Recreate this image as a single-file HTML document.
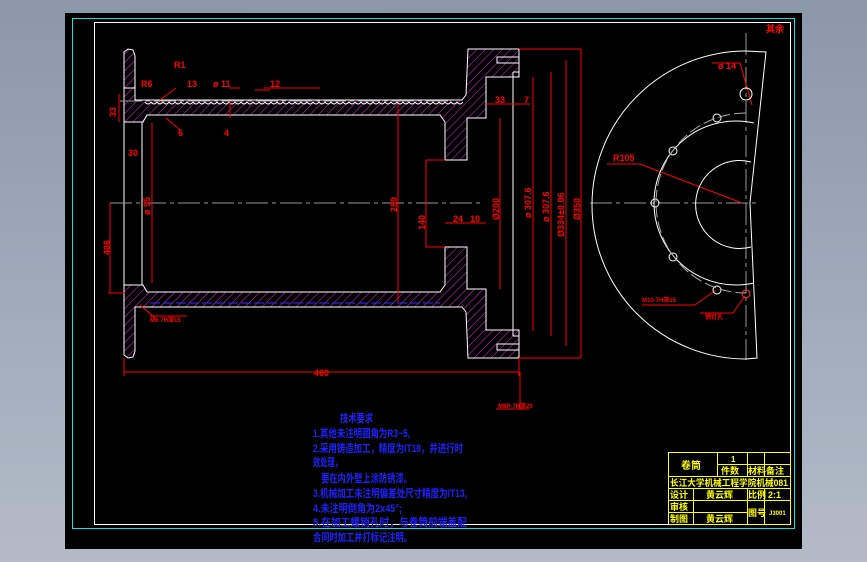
<!DOCTYPE html>
<html><head><meta charset="utf-8"><style>
html,body{margin:0;padding:0;}
body{width:867px;height:562px;overflow:hidden;background:linear-gradient(#8a98aa,#b3bbc7);position:relative;font-family:"Liberation Sans","Noto Sans CJK SC",sans-serif;}
svg{position:absolute;left:0;top:0;}
</style></head><body>
<svg width="867" height="562" viewBox="0 0 867 562" xmlns="http://www.w3.org/2000/svg">
<defs>
<pattern id="h" width="6" height="6" patternUnits="userSpaceOnUse" patternTransform="rotate(45)">
<line x1="0" y1="0" x2="0" y2="6" stroke="#e020e0" stroke-width="1"/>
</pattern>
</defs>
<rect x="65" y="13" width="737" height="536" fill="#000"/>
<rect x="72.5" y="18.5" width="722" height="510" fill="none" stroke="#00e5e5" stroke-width="1"/>
<rect x="94.5" y="22.5" width="696" height="502" fill="none" stroke="#fff" stroke-width="1"/>

<g stroke="#fff" stroke-width="1" fill="url(#h)">
<path d="M124,52 L128,49 L133,50 L135,56 L135,100 L462,100 L466,95 L468,49 L519,49 L519,77 L486,77 L486,118 L467,118 L467,160 L445,160 L445,122 L440,115 L147,115 L143,122 L124,122 Z"/>
<path d="M124,355 L128,358 L133,357 L135,351 L135,307 L462,307 L466,312 L468,358 L519,358 L519,330 L486,330 L486,289 L467,289 L467,247 L445,247 L445,285 L440,292 L147,292 L143,285 L124,285 Z"/>
</g>
<g stroke="#fff" stroke-width="1" fill="none">
<path d="M145,102 q3,4 6,0 q3,4 6,0 q3,4 6,0 q3,4 6,0 q3,4 6,0 q3,4 6,0 q3,4 6,0 q3,4 6,0 q3,4 6,0 q3,4 6,0 q3,4 6,0 q3,4 6,0 q3,4 6,0 q3,4 6,0 q3,4 6,0 q3,4 6,0 q3,4 6,0 q3,4 6,0 q3,4 6,0 q3,4 6,0 q3,4 6,0 q3,4 6,0 q3,4 6,0 q3,4 6,0 q3,4 6,0 q3,4 6,0 q3,4 6,0 q3,4 6,0 q3,4 6,0 q3,4 6,0 q3,4 6,0 q3,4 6,0 q3,4 6,0 q3,4 6,0 q3,4 6,0 q3,4 6,0 q3,4 6,0 q3,4 6,0 q3,4 6,0 q3,4 6,0 q3,4 6,0 q3,4 6,0 q3,4 6,0 q3,4 6,0 q3,4 6,0 q3,4 6,0 q3,4 6,0 q3,4 6,0 q3,4 6,0 q3,4 6,0 q3,4 6,0 q3,4 6,0 q3,4 6,0"/>
<line x1="124" y1="122" x2="124" y2="285"/>
<line x1="142" y1="122" x2="142" y2="285"/>
<line x1="124" y1="88" x2="135" y2="88"/>
<line x1="513" y1="72" x2="513" y2="336"/>
<line x1="513" y1="72" x2="519" y2="72"/><line x1="513" y1="336" x2="519" y2="336"/>
<rect x="497" y="57" width="22" height="6"/><rect x="497" y="344" width="22" height="6"/>
</g>
<line x1="150" y1="303" x2="440" y2="303" stroke="#3030ff" stroke-dasharray="10,3"/>
<g stroke="#999" stroke-width="1" stroke-dasharray="22,4,4,4">
<line x1="110" y1="203" x2="480" y2="203"/>
<line x1="590" y1="203" x2="757" y2="203"/>
<line x1="746" y1="33" x2="746" y2="360"/>
<line x1="120" y1="101" x2="450" y2="101"/>
</g>

<g stroke="#ff0000" stroke-width="1" fill="none">
<line x1="124" y1="372" x2="519" y2="372"/>
<line x1="124" y1="358" x2="124" y2="376"/><line x1="519" y1="358" x2="519" y2="376"/>
<line x1="110" y1="203" x2="110" y2="293"/><line x1="108" y1="293" x2="125" y2="293"/>
<line x1="119" y1="94" x2="119" y2="122"/>
<line x1="152" y1="123" x2="152" y2="283"/>
<line x1="398" y1="104" x2="398" y2="302"/>
<line x1="426" y1="160" x2="426" y2="247"/>
<line x1="426" y1="160" x2="445" y2="160"/><line x1="426" y1="247" x2="445" y2="247"/>
<line x1="445" y1="223" x2="486" y2="223"/>
<line x1="500" y1="118" x2="500" y2="289"/>
<line x1="533" y1="77" x2="533" y2="331"/>
<line x1="551" y1="72" x2="551" y2="336"/>
<line x1="566" y1="60" x2="566" y2="346"/>
<line x1="581" y1="49" x2="581" y2="358"/>
<line x1="519" y1="49" x2="581" y2="49"/><line x1="519" y1="358" x2="581" y2="358"/>
<line x1="486" y1="104" x2="530" y2="104"/>
<line x1="230" y1="101" x2="230" y2="118"/>
<line x1="230" y1="88" x2="240" y2="88"/>
<line x1="264" y1="88" x2="320" y2="88"/>
<line x1="176" y1="88" x2="160" y2="100"/>
<line x1="255" y1="90" x2="270" y2="90"/>
<line x1="166" y1="118" x2="180" y2="130"/>
<line x1="520" y1="372" x2="520" y2="410"/><line x1="496" y1="409" x2="529" y2="409"/>
<line x1="150" y1="316" x2="187" y2="316"/><line x1="140" y1="305" x2="155" y2="318"/>
<line x1="712" y1="63" x2="740" y2="63"/><line x1="740" y1="63" x2="752" y2="105"/>
<line x1="607" y1="164" x2="640" y2="164"/><line x1="640" y1="164" x2="742" y2="203"/>
<line x1="642" y1="305" x2="695" y2="305"/><line x1="695" y1="305" x2="716" y2="290"/>
<line x1="700" y1="313" x2="733" y2="313"/><line x1="733" y1="313" x2="745" y2="296"/>
</g>
<g fill="#ff0000" font-size="9" font-family="Liberation Sans Narrow,Liberation Sans,sans-serif" font-weight="bold">
<text x="314" y="376">460</text>
<text x="141" y="87">R6</text>
<text x="174" y="68">R1</text>
<text x="187" y="87">13</text>
<text x="213" y="87">ø 11</text>
<text x="270" y="87">12</text>
<text x="178" y="136">6</text>
<text x="224" y="136">4</text>
<text x="128" y="156">30</text>
<text x="495" y="103">33</text>
<text x="524" y="103">7</text>
<text x="453" y="222">24</text>
<text x="470" y="222">10</text>
<text x="766" y="32">其余</text>
<text x="718" y="69">ø 14</text>
<text x="613" y="161">R105</text>
<text x="642" y="302" font-size="6">M10-7H深15</text>
<text x="705" y="319" font-size="6">销钉孔</text>
<text x="150" y="322" font-size="6">M6-7H深15</text>
<text x="498" y="408" font-size="6">M8P-7H深20</text>
<text transform="translate(116,117) rotate(-90)">33</text>
<text transform="translate(110,255) rotate(-90)">406</text>
<text transform="translate(150,215) rotate(-90)">ø 95</text>
<text transform="translate(397,212) rotate(-90)">289</text>
<text transform="translate(425,230) rotate(-90)">140</text>
<text transform="translate(499,220) rotate(-90)">Ø200</text>
<text transform="translate(531,218) rotate(-90)">ø 307.6</text>
<text transform="translate(549,222) rotate(-90)">ø 307.6</text>
<text transform="translate(564,237) rotate(-90)">Ø334±0.06</text>
<text transform="translate(580,220) rotate(-90)">Ø350</text>
</g>

<g stroke="#fff" stroke-width="1" fill="none">
<path d="M746,51 A152,152 0 1 0 746,359"/>
<path d="M746,51 L766,52 L750,203 L757,358 L746,359"/>
<path d="M754,123 A82,82 0 1 0 754,283"/>
<path d="M751,162 A44,44 0 1 0 751,247"/>
<circle cx="746" cy="94" r="6"/>
<circle cx="655" cy="203" r="4"/><circle cx="673" cy="151" r="4"/><circle cx="717" cy="118" r="4"/>
<circle cx="673" cy="257" r="4"/><circle cx="717" cy="290" r="4"/>
</g>
<path d="M746,113 A90,90 0 1 0 746,293" stroke="#aaa" fill="none" stroke-dasharray="12,4"/>
<circle cx="746" cy="294" r="4" stroke="#ff3030" fill="none"/>

<g fill="#2020ff" font-size="11" font-weight="bold" font-family="Liberation Sans,Noto Sans CJK SC,sans-serif" lengthAdjust="spacingAndGlyphs">
<text x="340" y="422" textLength="33" lengthAdjust="spacingAndGlyphs">技术要求</text>
<text x="313" y="437" textLength="97" lengthAdjust="spacingAndGlyphs">1.其他未注明圆角为R3~5,</text>
<text x="313" y="452" textLength="150" lengthAdjust="spacingAndGlyphs">2.采用铸造加工，精度为IT18，并进行时</text>
<text x="313" y="466" textLength="29" lengthAdjust="spacingAndGlyphs">效处理，</text>
<text x="321" y="482" textLength="91" lengthAdjust="spacingAndGlyphs">要在内外壁上涂防锈漆。</text>
<text x="313" y="497" textLength="154" lengthAdjust="spacingAndGlyphs">3.机械加工未注明偏差处尺寸精度为IT13,</text>
<text x="313" y="512" textLength="89" lengthAdjust="spacingAndGlyphs">4.未注明倒角为2x45°;</text>
<text x="313" y="526" textLength="154" lengthAdjust="spacingAndGlyphs">5.在加工螺销孔时，与卷筒前端盖配</text>
<text x="313" y="541" textLength="99" lengthAdjust="spacingAndGlyphs">合同时加工并打标记注明。</text>
</g>

<g stroke="#ffff00" stroke-width="1" fill="none">
<rect x="668.5" y="452.5" width="122" height="72"/>
<line x1="668" y1="476.5" x2="790" y2="476.5"/>
<line x1="668" y1="488.5" x2="790" y2="488.5"/>
<line x1="668" y1="500.5" x2="764" y2="500.5"/>
<line x1="668" y1="512.5" x2="747" y2="512.5"/>
<line x1="717" y1="464.5" x2="790" y2="464.5"/>
<line x1="764" y1="500.5" x2="790" y2="500.5"/>
<line x1="717.5" y1="452" x2="717.5" y2="476"/>
<line x1="747.5" y1="452" x2="747.5" y2="476"/>
<line x1="764.5" y1="452" x2="764.5" y2="476"/>
<line x1="693.5" y1="488" x2="693.5" y2="524"/>
<line x1="747.5" y1="488" x2="747.5" y2="524"/>
<line x1="764.5" y1="488" x2="764.5" y2="524"/>
</g>
<g fill="#ffff00" font-size="10" font-weight="bold" font-family="Liberation Sans,Noto Sans CJK SC,sans-serif">
<text x="681" y="469">卷筒</text>
<text x="731" y="462" font-size="8">1</text>
<text x="721" y="474" font-size="9">件数</text>
<text x="748" y="474" font-size="9">材料</text>
<text x="766" y="474" font-size="9">备注</text>
<text x="670" y="486" font-size="9" textLength="118" lengthAdjust="spacingAndGlyphs">长江大学机械工程学院机械081</text>
<text x="670" y="498" font-size="9">设计</text>
<text x="706" y="498" font-size="9">黄云辉</text>
<text x="748" y="498" font-size="9">比例</text>
<text x="768" y="498" font-size="9">2:1</text>
<text x="670" y="510" font-size="9">审核</text>
<text x="748" y="516" font-size="9">图号</text>
<text x="769" y="515" font-size="6">J3001</text>
<text x="670" y="522" font-size="9">制图</text>
<text x="706" y="522" font-size="9">黄云辉</text>
</g>
</svg>
</body></html>
